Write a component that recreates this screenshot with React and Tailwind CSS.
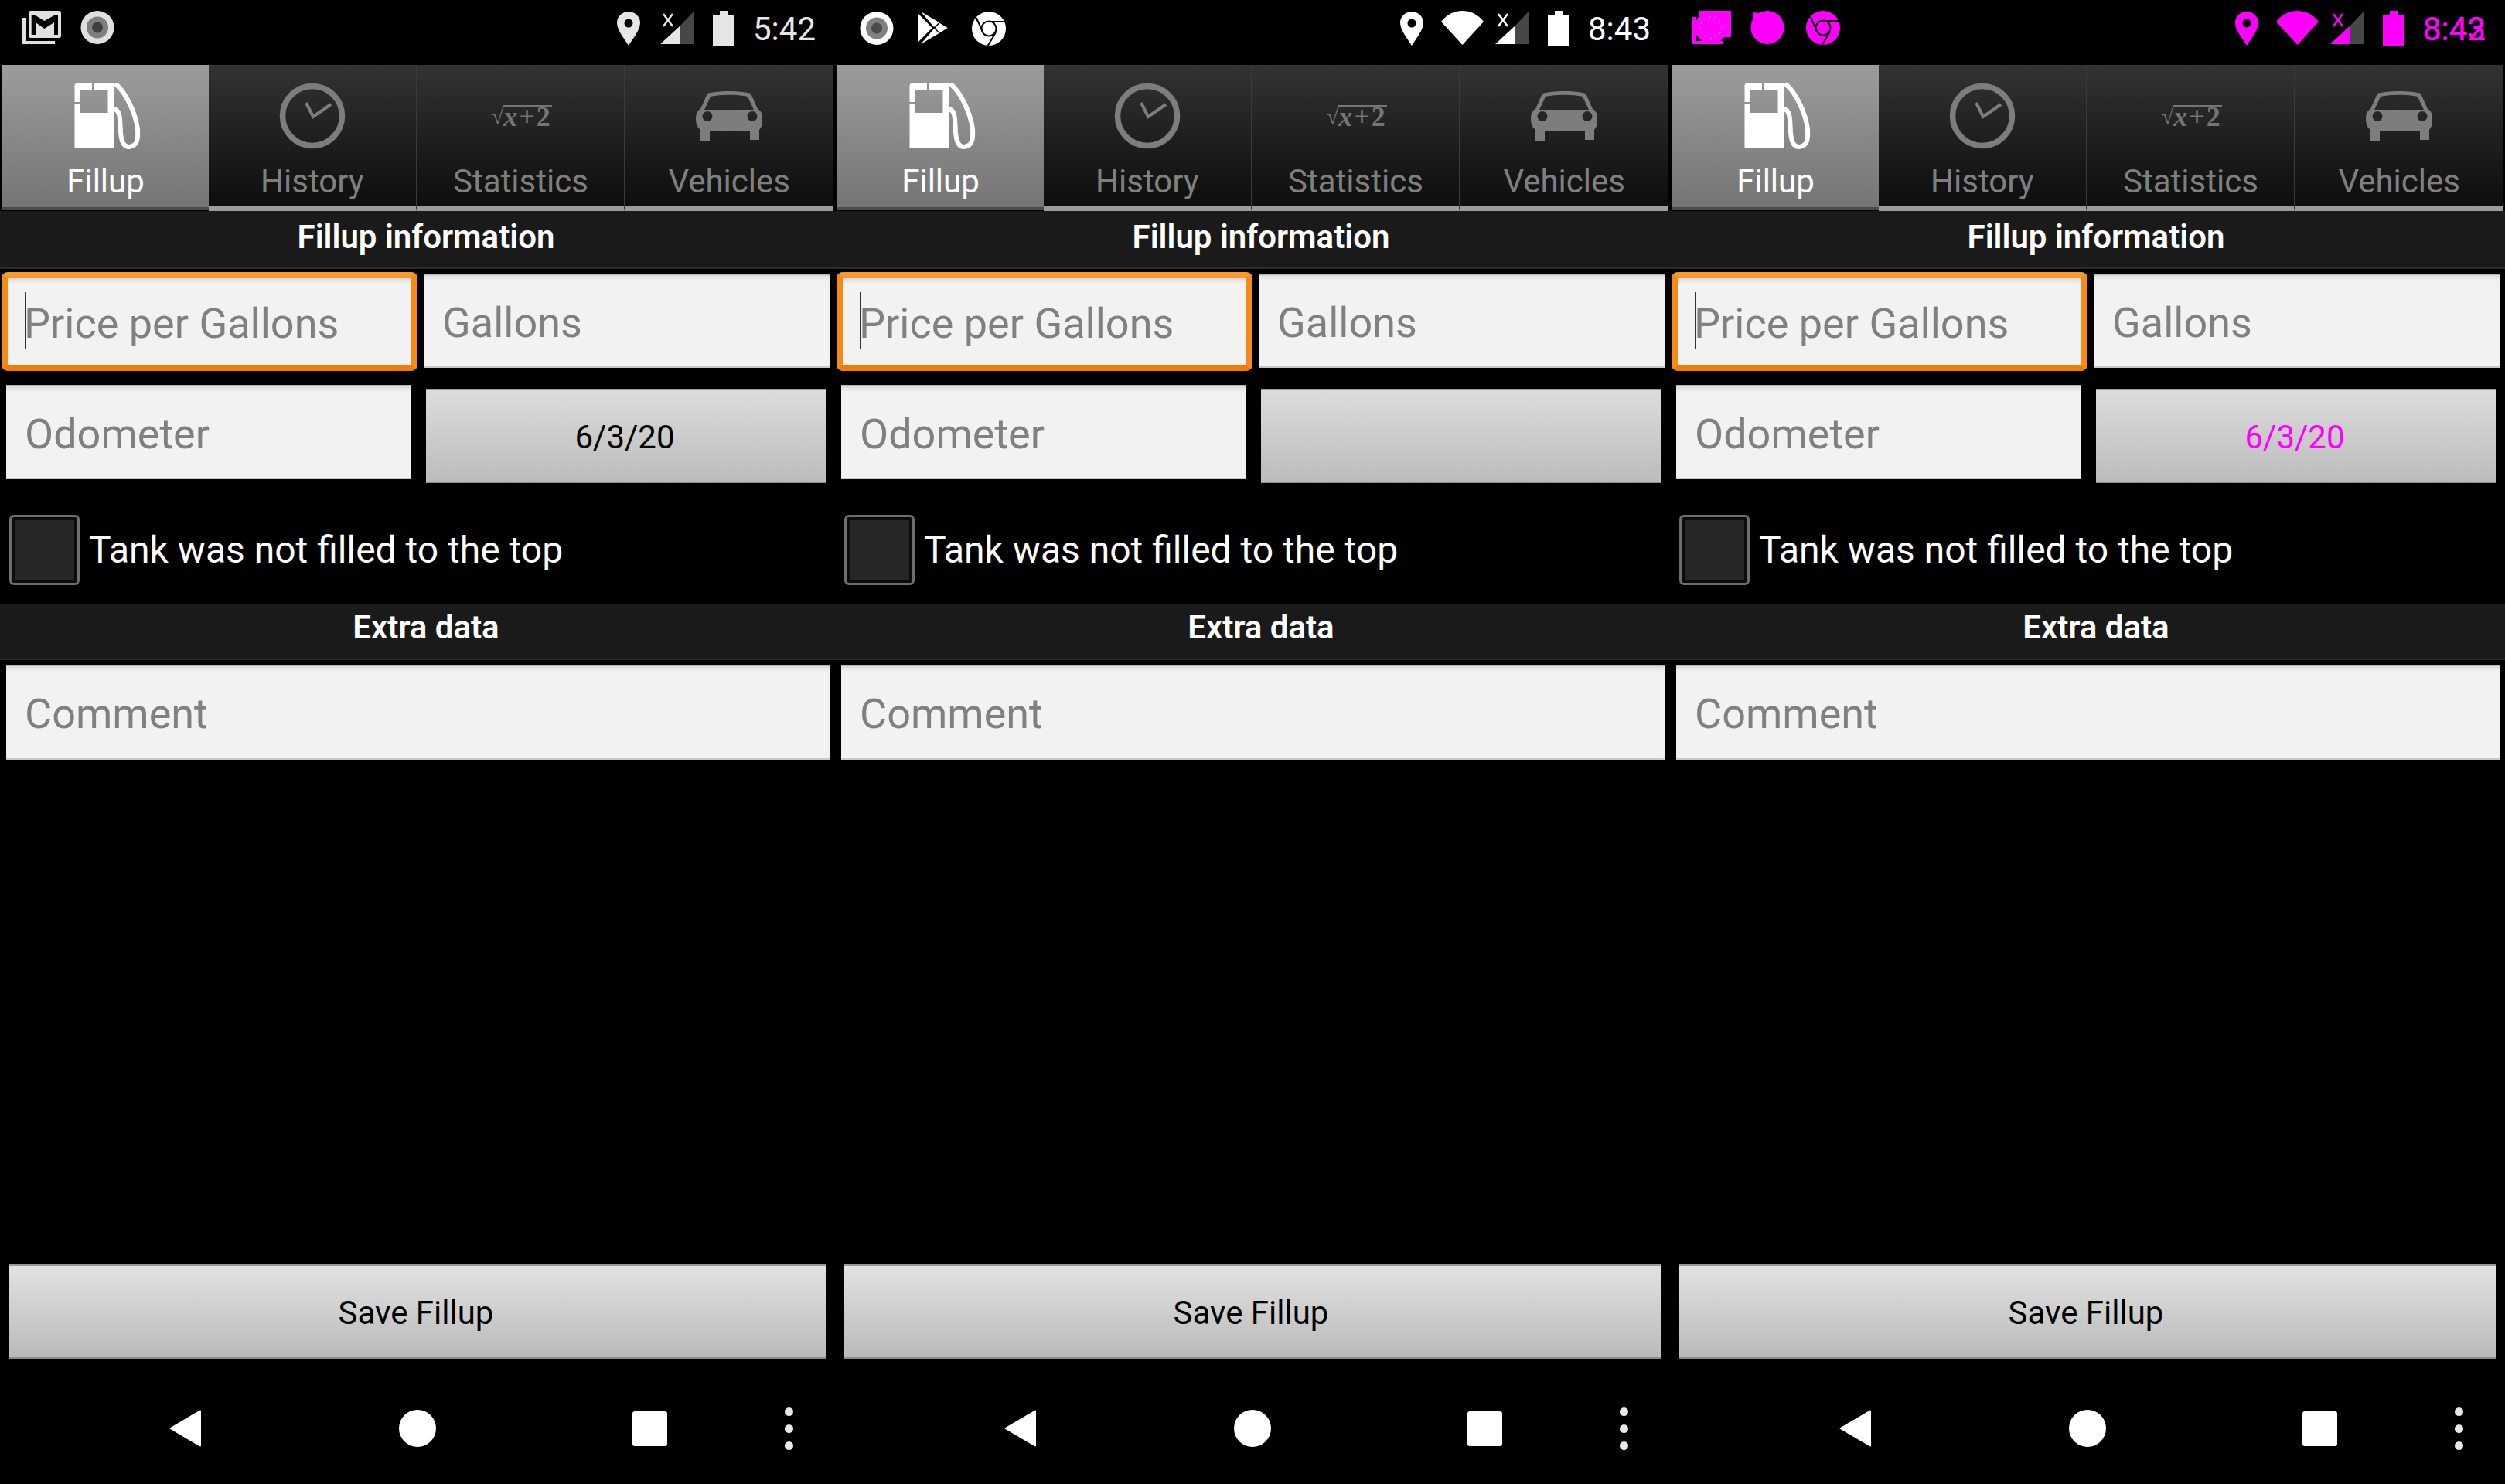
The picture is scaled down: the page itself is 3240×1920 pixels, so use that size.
const roboto = 'font-["Roboto",sans-serif]';

function Pin() {
  return (
    <svg width="30" height="44" viewBox="0 0 30 44" className="block">
      <path fillRule="evenodd" fill="currentColor" d="M15 0C6.7 0 0 6.4 0 14.6C0 24 10 36 15 44C20 36 30 24 30 14.6C30 6.4 23.3 0 15 0ZM15 9.5A5.5 5.5 0 1 1 15 20.5A5.5 5.5 0 1 1 15 9.5Z" />
    </svg>
  );
}
function Wifi() {
  return (
    <svg width="55" height="44" viewBox="0 0 55 44" className="block">
      <path fill="currentColor" d="M0 14C8 4 18 0 27.5 0C37 0 47 4 55 14L27.5 44Z" />
    </svg>
  );
}
function Signal() {
  return (
    <svg width="43" height="44" viewBox="0 0 43 44" className="block">
      <path fill="#474747" d="M43 1V43H26V19Z" />
      <path fill="currentColor" d="M0 43L26 19V43Z" />
      <path fill="none" stroke="currentColor" strokeWidth="2.5" d="M4 4L16 20M16 4L4 20" />
    </svg>
  );
}
function Battery() {
  return (
    <svg width="28" height="45" viewBox="0 0 28 45" className="block">
      <path fill="currentColor" d="M9 0H19V5H28V45H0V5H9Z" />
    </svg>
  );
}
function GmailIcon() {
  return (
    <svg width="51" height="43" viewBox="0 0 51 43" className="block">
      <path fill="#e0e0e0" d="M0 9H5V39H43V43H2Q0 43 0 41Z" />
      <rect x="9" y="0" width="42" height="35" rx="3" fill="#e0e0e0" />
      <path fill="#000" d="M12.7 6H18L29.3 13L42 6H47V31H42V15L29.3 23L18 15V31H12.7Z" />
    </svg>
  );
}
function RecordIcon({ outer, mid, inner }) {
  return (
    <svg width="44" height="43" viewBox="0 0 44 43" className="block">
      <circle cx="22" cy="21.5" r="21.5" fill={outer} />
      <circle cx="22" cy="21.5" r="14" fill={mid} />
      <circle cx="22" cy="21.5" r="7" fill={inner} />
    </svg>
  );
}
function PlayIcon() {
  return (
    <svg width="40" height="43" viewBox="0 0 40 43" className="block">
      <path fill="#fff" d="M0 2L18.7 21L0 40ZM4 0L27.7 14L21 20ZM4 42L27.7 28L21 22ZM28.5 15L38.7 21L28.5 27.5L22.5 21Z" />
    </svg>
  );
}
function ChromeIcon() {
  return (
    <svg width="44" height="44" viewBox="0 0 44 44" className="block">
      <circle cx="22" cy="22" r="22" fill="currentColor" />
      <circle cx="22" cy="22" r="9.5" fill="none" stroke="#000" strokeWidth="2" />
      <path fill="none" stroke="#000" strokeWidth="2" d="M21 13H42M5.7 8L14 26M31 27L20.7 44" />
    </svg>
  );
}
function MagentaCluster1() {
  return (
    <svg width="51" height="43" viewBox="0 0 51 43" className="block">
      <path fill="#ff00ff" d="M0 8H5V39H40V43H0ZM9 0H51V34H9Z" />
      <circle cx="25" cy="21.5" r="21" fill="#ff00ff" />
      <circle cx="25" cy="21.5" r="14" fill="none" stroke="#f6c4f6" strokeWidth="1" strokeDasharray="2 5" />
      <path fill="none" stroke="#c030c0" strokeWidth="0.8" d="M25 22L35 15M14 12V32" />
    </svg>
  );
}
function MagentaCluster2() {
  return (
    <svg width="44" height="43" viewBox="0 0 44 43" className="block">
      <circle cx="22" cy="21.5" r="21.5" fill="#ff00ff" />
      <path fill="#ff00ff" d="M3 2L12 3L3 12Z" />
      <path fill="none" stroke="#c030c0" strokeWidth="0.8" strokeDasharray="3 2" d="M5 3L26 21L6 40" />
    </svg>
  );
}

function PumpIcon() {
  return (
    <svg width="92" height="90" viewBox="0 0 92 90" className="block">
      <path fillRule="evenodd" fill="#fff" d="M7 3H56.5V87H5.5V5ZM12.5 11V41H48.5V11Z" />
      <path fill="#939393" d="M28 3H30V11H28ZM5 27H12.5V29H5Z" />
      <path fill="none" stroke="#fff" strokeWidth="6" strokeLinecap="round" d="M60 5C72 16 84 40 87 62C88 76 86 84 76 85C68 85 66 77 65 66C64 50 65 37 56 36" />
    </svg>
  );
}
function ClockIcon() {
  return (
    <svg width="86" height="86" viewBox="0 0 86 86" className="block">
      <circle cx="43" cy="43" r="38.5" fill="none" stroke="#7d7d7d" strokeWidth="7.5" />
      <path fill="none" stroke="#7d7d7d" strokeWidth="4" d="M35 26L44 44L67 28" />
    </svg>
  );
}
function CarIcon() {
  return (
    <svg width="86" height="66" viewBox="0 0 86 66" className="block">
      <path fillRule="evenodd" fill="#7d7d7d" d="M15 4C28 0 58 0 71 4L80 24C84 26 86 30 86 36C86 44 85 48 82 51V64H70V52H18V65H6V51C2 48 0 44 0 36C0 30 2 26 6 24ZM19 8L11 25H75L67 8C55 5 31 5 19 8ZM15 27A6.5 6.5 0 1 0 15 40A6.5 6.5 0 1 0 15 27ZM73 27A6.5 6.5 0 1 0 73 40A6.5 6.5 0 1 0 73 27Z" />
    </svg>
  );
}
function MathIcon() {
  return (
    <div className='flex items-end h-[29px] mr-[3px] text-[#757575] font-["Liberation_Serif",serif] font-bold text-[36px] leading-[28px]'>
      <span className="font-normal text-[28px] leading-[28px] w-[21px] text-right">√</span>
      <span className="border-t-2 border-[#757575] h-[29px] flex items-center tracking-[2px]">
        <span className="italic">x</span>
        <span>+2</span>
      </span>
    </div>
  );
}

function Tab({ label, active, divider, children }) {
  return (
    <div
      className={
        active
          ? "w-[267px] h-[188px] flex flex-col items-center bg-gradient-to-b from-[#9c9c9c] to-[#757575] border-b-[4px] border-[#4a4a4a] text-[#ffffff]"
          : `flex-1 h-[189px] flex flex-col items-center bg-gradient-to-b from-[#333333] to-[#0e0e0e] border-b-[6px] border-[#9c9c9c] text-[#7f7f7f] ${divider ? "border-l-2 border-l-[#3a3a3a]" : ""}`
      }
    >
      <div className="h-[126px] pt-[6px] flex items-center justify-center">{children}</div>
      <div className={`${roboto} text-[42px] leading-[50px]`}>{label}</div>
    </div>
  );
}

function Section({ title, className }) {
  return (
    <div className={`bg-[#1a1a1a] flex items-center justify-center pl-[22px] ${className}`}>
      <span className={`${roboto} font-semibold text-[42px] leading-[50px] text-white`}>{title}</span>
    </div>
  );
}

function Field({ text, className }) {
  return (
    <div className={`bg-[#f2f2f2] flex items-center pl-[24px] pt-[5px] border-t-2 border-t-[#b5b5b5] border-b-2 border-b-[#c8c8c8] shadow-[inset_0_6px_6px_-4px_#d0d0d0] ${className}`}>
      <span className={`${roboto} text-[54px] leading-[64px] text-[#808080]`}>{text}</span>
    </div>
  );
}

function Panel({ variant }) {
  const magenta = variant === 3;
  const statusColor = variant === 1 ? "text-[#e6e6e6]" : magenta ? "text-[#ff00ff]" : "text-[#ffffff]";
  return (
    <div className="w-[1080px] h-[1920px] bg-black flex flex-col">
      <div className={`h-[84px] flex items-start pt-[14px] ${statusColor}`}>
        {variant === 1 && (
          <div className="flex ml-[28px] gap-[25px]">
            <GmailIcon />
            <RecordIcon outer="#e0e0e0" mid="#7f7f7f" inner="#404040" />
          </div>
        )}
        {variant === 2 && (
          <div className="flex ml-[32px] mt-[1px]">
            <RecordIcon outer="#ffffff" mid="#808080" inner="#4a4a4a" />
            <div className="ml-[31px]"><PlayIcon /></div>
            <div className="ml-[30px]"><ChromeIcon /></div>
          </div>
        )}
        {variant === 3 && (
          <div className="flex ml-[28px]">
            <MagentaCluster1 />
            <div className="ml-[25px]"><MagentaCluster2 /></div>
            <div className="ml-[28px]"><ChromeIcon /></div>
          </div>
        )}
        <div className="ml-auto flex items-start pr-[25px]">
          <div className="mt-[1px]"><Pin /></div>
          {variant !== 1 && <div className="ml-[23px]"><Wifi /></div>}
          <div className={variant === 1 ? "ml-[26px]" : "ml-[15px]"}><Signal /></div>
          <div className="ml-[25px]"><Battery /></div>
          <div className={`ml-[24px] relative ${roboto} text-[42px] leading-[48px] h-[48px]`}>
            {variant === 1 ? "5:42" : variant === 2 ? "8:43" : "8:42"}
            {magenta && <span className="absolute left-0 top-0">8:43</span>}
          </div>
        </div>
      </div>

      <div className="flex items-start px-[3px]">
        <Tab label="Fillup" active><PumpIcon /></Tab>
        <Tab label="History"><ClockIcon /></Tab>
        <Tab label="Statistics" divider><MathIcon /></Tab>
        <Tab label="Vehicles" divider><CarIcon /></Tab>
      </div>

      <Section title="Fillup information" className="h-[75px] pb-[6px] border-b-2 border-b-[#2c2c2c] shrink-0" />

      <div className="flex items-start mt-[4px]">
        <div className="relative ml-[2px] w-[538px] h-[128px] rounded-[8px] border-[8px] border-t-[#f79a2b] border-x-[#f58a16] border-b-[#f27c06] flex">
          <Field text="Price per Gallons" className="flex-1 !border-y-0 !pl-[21px]" />
          <div className="absolute left-[22px] top-[18px] w-[2px] h-[73px] bg-[#333333]" />
        </div>
        <Field text="Gallons" className="ml-[8px] mt-[2px] w-[525px] h-[122px]" />
      </div>

      <div className="flex items-start mt-[18px]">
        <Field text="Odometer" className="ml-[8px] w-[524px] h-[122px]" />
        <div className="ml-[19px] mt-[5px] w-[517px] h-[122px] pt-[4px] pr-[3px] bg-gradient-to-b from-[#dcdcdc] to-[#bcbcbc] border-y-2 border-t-[#9a9a9a] border-b-[#8c8c8c] flex items-center justify-center">
          {variant !== 2 && (
            <span className={`${roboto} text-[42px] leading-[50px] ${magenta ? "text-[#ff00ff]" : "text-[#000000]"}`}>6/3/20</span>
          )}
        </div>
      </div>

      <div className="flex items-center mt-[41px]">
        <div className="ml-[12px] w-[91px] h-[91px] rounded-[6px] bg-[#262626] border-[3px] border-[#6e6e6e] shadow-[inset_0_0_0_4px_#0c0c0c]" />
        <span className={`${roboto} ml-[12px] text-[48px] leading-[64px] text-white`}>Tank was not filled to the top</span>
      </div>

      <Section title="Extra data" className="mt-[25px] h-[72px] pb-[10px] border-b-2 border-b-[#2c2c2c] shrink-0" />

      <Field text="Comment" className="mt-[6px] ml-[8px] w-[1065px] h-[123px] shrink-0" />

      <div className="flex-1" />

      <div className="ml-[11px] w-[1057px] h-[122px] pt-[4px] pr-[3px] bg-gradient-to-b from-[#e2e2e2] to-[#bababa] border-y-2 border-t-[#9a9a9a] border-b-[#8c8c8c] flex items-center justify-center">
        <span className={`${roboto} text-[42px] leading-[50px] text-black`}>Save Fillup</span>
      </div>

      <div className="h-[162px] flex items-center pl-[219px] pt-[18px]">
        <svg width="41" height="48" viewBox="0 0 41 48" className="block">
          <path fill="#fff" stroke="#fff" strokeWidth="2" strokeLinejoin="round" d="M40 1.5V46.5L1.5 24Z" />
        </svg>
        <div className="ml-[256px] w-[48px] h-[48px] rounded-full bg-white" />
        <div className="ml-[254px] w-[45px] h-[45px] rounded-[3px] bg-white" />
        <div className="ml-[152px] flex flex-col gap-[11px]">
          <div className="w-[11px] h-[11px] rounded-full bg-[#e8e8e8]" />
          <div className="w-[11px] h-[11px] rounded-full bg-[#e8e8e8]" />
          <div className="w-[11px] h-[11px] rounded-full bg-[#e8e8e8]" />
        </div>
      </div>
    </div>
  );
}

export default function App() {
  return (
    <div className="w-[3240px] h-[1920px] flex bg-black overflow-hidden">
      <Panel variant={1} />
      <Panel variant={2} />
      <Panel variant={3} />
    </div>
  );
}
